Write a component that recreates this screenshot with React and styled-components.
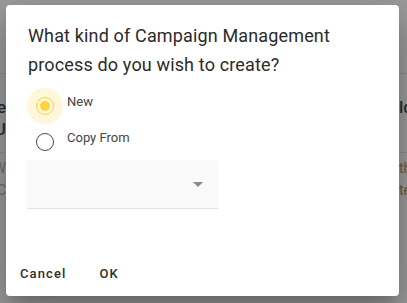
import React from 'react';
import styled, { createGlobalStyle } from 'styled-components';

const GlobalStyle = createGlobalStyle`
  html, body {
    margin: 0;
    padding: 0;
    width: 407px;
    height: 303px;
    overflow: hidden;
    font-family: Roboto, "Liberation Sans", Arial, sans-serif;
  }
`;

const Page = styled.div`
  position: relative;
  width: 407px;
  height: 303px;
  background: #9c9c9c;
  overflow: hidden;
`;

const BgGrid = styled.div`
  display: grid;
  grid-template-columns: 6px 1fr 8px;
  grid-template-rows: 74px 79px 1fr;
  height: 100%;
`;

const BgCell = styled.div`
  overflow: hidden;
  display: flex;
  flex-direction: column;
  align-items: ${p => (p.$end ? 'flex-end' : 'flex-start')};
  border-bottom: ${p => (p.$line ? '1px solid #8e8e8e' : 'none')};
  padding-top: ${p => p.$top || 0}px;
`;

const BgTitle = styled.span`
  white-space: nowrap;
  font-size: 17px;
  font-weight: 500;
  line-height: 22px;
  color: #2a2f36;
`;

const BgText = styled.span`
  white-space: nowrap;
  font-size: 14px;
  line-height: 22px;
  color: ${p => p.$color || '#6d7075'};
`;

const Overlay = styled.div`
  position: absolute;
  inset: 0;
  padding: 5px 8px 7px 6px;
  display: flex;
`;

const Dialog = styled.div`
  flex: 1;
  background: #fff;
  border-radius: 4px;
  box-shadow: 0 11px 15px -7px rgba(0, 0, 0, 0.2), 0 24px 38px 3px rgba(0, 0, 0, 0.14),
    0 9px 46px 8px rgba(0, 0, 0, 0.12);
  display: flex;
  flex-direction: column;
`;

const Content = styled.div`
  padding: 16px 22px 0 21px;
  display: flex;
  flex-direction: column;
`;

const Title = styled.h2`
  margin: 0 0 9px 1px;
  font-size: 18px;
  font-weight: 400;
  line-height: 29px;
  color: #2b2b2b;
  letter-spacing: 0.15px;
`;

const RadioRow = styled.label`
  display: flex;
  align-items: flex-start;
  height: 36px;
  gap: 4px;
  cursor: pointer;
`;

const RadioHalo = styled.span`
  width: 36px;
  height: 36px;
  border-radius: 50%;
  flex-shrink: 0;
  display: flex;
  align-items: center;
  justify-content: center;
  background: ${p => (p.$checked ? '#fff7dc' : 'transparent')};
`;

const RadioRing = styled.span`
  width: 18px;
  height: 18px;
  box-sizing: border-box;
  border-radius: 50%;
  border: ${p => (p.$checked ? '1.5px solid #fdd33f' : '1.5px solid #4a4a4a')};
  display: flex;
  align-items: center;
  justify-content: center;

  &::after {
    content: '';
    width: 10px;
    height: 10px;
    border-radius: 50%;
    background: ${p => (p.$checked ? '#fdd33f' : 'transparent')};
  }
`;

const RadioLabel = styled.span`
  padding-top: 4px;
  font-size: 13px;
  line-height: 20px;
  color: #444;
`;

const Select = styled.div`
  width: 191px;
  height: 49px;
  box-sizing: border-box;
  background: #f9f9f9;
  border-bottom: 1px solid #e2e2e2;
  border-radius: 4px 4px 0 0;
  display: flex;
  align-items: center;
  justify-content: flex-end;
  padding: 1px 15px 0 0;
`;

const Arrow = styled.span`
  width: 0;
  height: 0;
  border-left: 5px solid transparent;
  border-right: 5px solid transparent;
  border-top: 5px solid #8a8a8a;
`;

const Actions = styled.div`
  margin-top: auto;
  padding: 0 0 5px 6px;
  display: flex;
  align-items: center;
  gap: 17px;
`;

const Button = styled.button`
  height: 36px;
  padding: 0 8px;
  border: none;
  background: transparent;
  font-family: Roboto, "Liberation Sans", Arial, sans-serif;
  font-size: 13px;
  font-weight: 500;
  letter-spacing: 1.1px;
  color: #2e2e2e;
  cursor: pointer;
`;

const options = [
  { label: 'New', checked: true },
  { label: 'Copy From', checked: false },
];

export default function App() {
  return (
    <>
      <GlobalStyle />
      <Page>
        <BgGrid>
          <BgCell $line />
          <BgCell $line />
          <BgCell $line />
          <BgCell $end $line $top={22}>
            <BgTitle>Title</BgTitle>
            <BgTitle>ACCOU</BgTitle>
          </BgCell>
          <BgCell $line />
          <BgCell $line $top={22}>
            <BgTitle>ld</BgTitle>
          </BgCell>
          <BgCell $end $top={4}>
            <BgText>W</BgText>
            <BgText>C</BgText>
          </BgCell>
          <BgCell />
          <BgCell $top={4}>
            <BgText $color="#6a5b42">th</BgText>
            <BgText $color="#6a5b42">te</BgText>
          </BgCell>
        </BgGrid>
        <Overlay>
          <Dialog>
            <Content>
              <Title>What kind of Campaign Management process do you wish to create?</Title>
              {options.map(o => (
                <RadioRow key={o.label}>
                  <RadioHalo $checked={o.checked}>
                    <RadioRing $checked={o.checked} />
                  </RadioHalo>
                  <RadioLabel>{o.label}</RadioLabel>
                </RadioRow>
              ))}
              <Select>
                <Arrow />
              </Select>
            </Content>
            <Actions>
              <Button>Cancel</Button>
              <Button>OK</Button>
            </Actions>
          </Dialog>
        </Overlay>
      </Page>
    </>
  );
}
